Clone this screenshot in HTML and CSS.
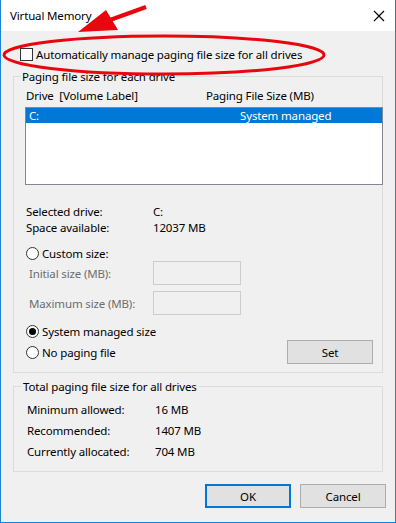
FILE: index.html
```html
<!DOCTYPE html>
<html lang="en">
  <head>
    <meta charset="UTF-8" />
    <title>Virtual Memory</title>
    <link rel="stylesheet" href="styles.css">
  </head>
  <body>
    <div class="window">
      <!-- Title bar -->
      <div class="titlebar">
        <span class="title">Virtual Memory</span>
        <svg class="close" width="12" height="12" viewBox="0 0 12 12">
          <path d="M1 1 L11 11 M11 1 L1 11" stroke="#000" stroke-width="1.1" fill="none" />
        </svg>
      </div>

      <div class="dialog">
        <div class="check-row">
          <span class="checkbox"></span>
          <span>Automatically manage paging file size for all drives</span>
        </div>

        <!-- Per drive settings -->
        <fieldset class="group drives">
          <legend>Paging file size for each drive</legend>
          <div class="list-head">
            <span class="col-drive">Drive&nbsp; [Volume Label]</span>
            <span>Paging File Size (MB)</span>
          </div>
          <div class="list-box">
            <div class="list-row selected">
              <span class="col-c">C:</span>
              <span>System managed</span>
            </div>
          </div>

          <div class="info">
            <div class="info-row"><span class="key">Selected drive:</span><span>C:</span></div>
            <div class="info-row"><span class="key">Space available:</span><span>12037 MB</span></div>
          </div>

          <div class="radio-row custom">
            <span class="radio"></span><span>Custom size:</span>
          </div>
          <div class="field-row">
            <span class="field-label">Initial size (MB):</span>
            <span class="edit"></span>
          </div>
          <div class="field-row second">
            <span class="field-label">Maximum size (MB):</span>
            <span class="edit"></span>
          </div>
          <div class="radio-row system">
            <span class="radio on"></span><span>System managed size</span>
          </div>
          <div class="last-row">
            <div class="radio-row">
              <span class="radio"></span><span>No paging file</span>
            </div>
            <button class="btn set">Set</button>
          </div>
        </fieldset>

        <!-- Totals -->
        <fieldset class="group totals">
          <legend>Total paging file size for all drives</legend>
          <div class="total-row"><span class="key">Minimum allowed:</span><span>16 MB</span></div>
          <div class="total-row"><span class="key">Recommended:</span><span>1407 MB</span></div>
          <div class="total-row"><span class="key">Currently allocated:</span><span>704 MB</span></div>
        </fieldset>

        <div class="buttons">
          <button class="btn default">OK</button>
          <button class="btn">Cancel</button>
        </div>
      </div>

      <!-- Red annotation drawn over the dialog -->
      <svg class="annotation" width="396" height="523" viewBox="0 0 396 523">
        <ellipse cx="164" cy="55" rx="160" ry="19" fill="none" stroke="#e8070e" stroke-width="3" />
        <line x1="146" y1="7" x2="110" y2="20" stroke="#e8070e" stroke-width="4" />
        <polygon points="78,32 106,10 118,30" fill="#e8070e" />
      </svg>
    </div>
  </body>
</html>
```

FILE: styles.css
```css
* {
  box-sizing: border-box;
}
body {
  margin: 0;
  font-family: "Noto Sans", "Open Sans", sans-serif;
  font-size: 11.5px;
  letter-spacing: -0.15px;
  color: #000;
}
.window {
  position: relative;
  width: 396px;
  height: 523px;
  background-color: #f0f0f0;
  border: 1px solid #1883d7;
  border-top: none;
}
.titlebar {
  height: 31px;
  background-color: #ffffff;
  display: flex;
  align-items: center;
  justify-content: space-between;
  padding: 0 9px 0 9px;
}
.close {
  margin-right: 1px;
}
.dialog {
  padding: 0 12px;
}
.check-row {
  display: flex;
  align-items: center;
  gap: 3px;
  height: 15px;
  margin-top: 16px;
  margin-left: 7px;
}
.checkbox {
  width: 13px;
  height: 13px;
  border: 1px solid #333;
  background-color: #fff;
}
.group {
  margin: 0;
  border: 1px solid #dcdcdc;
  padding: 0 9px 8px 12px;
  min-width: 0;
}
.group legend {
  line-height: 15px;
  padding: 0 1px;
  margin-left: -5px;
}
.drives {
  margin-top: 7px;
}
.list-head {
  display: flex;
  line-height: 15px;
  margin-top: 4px;
}
.col-drive {
  width: 180px;
}
.list-box {
  height: 78px;
  margin: 4px -10px 0 -1px;
  border: 1px solid #828790;
  background-color: #fff;
}
.list-row {
  display: flex;
  line-height: 15px;
  padding-left: 3px;
}
.list-row.selected {
  background-color: #0078d7;
  color: #fff;
}
.col-c {
  width: 211px;
}
.info {
  margin-top: 19px;
}
.info-row {
  display: flex;
  line-height: 16px;
}
.info-row .key {
  width: 127px;
}
.radio-row {
  display: flex;
  align-items: center;
  gap: 3px;
  height: 16px;
}
.custom {
  margin-top: 9px;
}
.system {
  margin-top: 8px;
}
.radio {
  width: 13px;
  height: 13px;
  border: 1px solid #333;
  border-radius: 50%;
  background-color: #fff;
  display: flex;
  align-items: center;
  justify-content: center;
}
.radio.on::after {
  content: "";
  width: 7px;
  height: 7px;
  border-radius: 50%;
  background-color: #000;
}
.field-row {
  display: flex;
  align-items: center;
  height: 24px;
  padding-left: 3px;
  color: #6d6d6d;
}
.field-row.second {
  margin-top: 6px;
}
.field-label {
  width: 124px;
}
.edit {
  width: 88px;
  height: 24px;
  border: 1px solid #cccccc;
  background-color: #f0f0f0;
}
.last-row {
  display: flex;
  align-items: center;
  justify-content: space-between;
  height: 24px;
  margin-top: 1px;
}
.btn {
  font-family: inherit;
  font-size: 11.5px;
  letter-spacing: -0.15px;
  color: #000;
  width: 86px;
  height: 24px;
  padding: 0;
  background-color: #e1e1e1;
  border: 1px solid #adadad;
}
.btn.default {
  border: 2px solid #0078d7;
}
.totals {
  margin-top: 6px;
  padding: 0 9px 9px 13px;
}
.total-row {
  display: flex;
  line-height: 21px;
}
.totals .total-row:first-of-type {
  margin-top: 5px;
}
.total-row .key {
  width: 128px;
}
.buttons {
  display: flex;
  justify-content: flex-end;
  gap: 9px;
  margin-top: 12px;
  margin-right: -3px;
}
.annotation {
  position: absolute;
  left: -1px;
  top: 0;
  pointer-events: none;
}
```
